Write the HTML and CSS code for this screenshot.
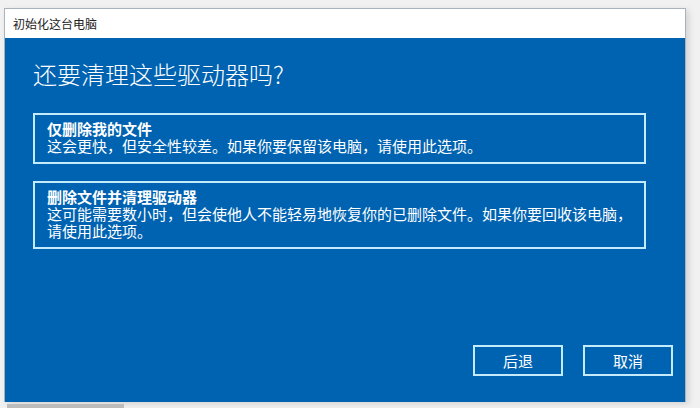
FILE: index.html
```html
<!DOCTYPE html>
<html lang="zh-CN">
<head>
  <meta charset="UTF-8" />
  <meta name="viewport" content="width=device-width, initial-scale=1.0"/>
  <title>初始化这台电脑</title>
  <link rel="stylesheet" href="styles.css">
</head>
<body>
  <div class="dialog">
    <div class="title-bar">初始化这台电脑</div>
    <div class="content">
      <h1>还要清理这些驱动器吗?</h1>

      <div class="option">
        <div class="option-title">仅删除我的文件</div>
        <div class="option-desc">这会更快，但安全性较差。如果你要保留该电脑，请使用此选项。</div>
      </div>

      <div class="option">
        <div class="option-title">删除文件并清理驱动器</div>
        <div class="option-desc">这可能需要数小时，但会使他人不能轻易地恢复你的已删除文件。如果你要回收该电脑，<br>请使用此选项。</div>
      </div>

      <div class="actions">
        <button class="btn">后退</button>
        <button class="btn">取消</button>
      </div>
    </div>
  </div>
  <div class="scroll-thumb"></div>
</body>
</html>
```

FILE: styles.css
```css
body {
  background-color: #f1f1f1;
  font-family: "Noto Sans CJK SC", "Noto Sans", sans-serif;
  margin: 0;
  padding: 8px 0 0 4px;
  height: 408px;
  box-sizing: border-box;
  overflow: hidden;
}

.dialog {
  width: 682px;
  height: 394px;
  display: flex;
  flex-direction: column;
  border: 1px solid #a9b3bd;
  border-bottom: none;
  box-sizing: border-box;
  box-shadow: 3px 2px 6px rgba(0,0,0,0.12);
}

.title-bar {
  height: 29px;
  background: #fff;
  color: #222;
  font-size: 12px;
  line-height: 29px;
  padding-left: 8px;
}

.content {
  flex: 1;
  background: #0063b1;
  color: #fff;
  padding: 20px 0 0 28px;
  display: flex;
  flex-direction: column;
}

h1 {
  font-weight: 300;
  font-size: 24px;
  line-height: 32px;
  margin: 0 0 23px;
}

.option {
  width: 613px;
  box-sizing: border-box;
  border: 2px solid #c3ebfb;
  padding: 5px 12px 8px;
  margin-bottom: 17px;
  font-size: 15px;
  line-height: 17px;
}

.option-title {
  font-weight: bold;
}

.option-desc {
  white-space: nowrap;
}

.actions {
  margin-top: auto;
  display: flex;
  justify-content: flex-end;
  gap: 20px;
  padding: 0 12px 26px 0;
}

.btn {
  width: 90px;
  height: 31px;
  background: transparent;
  border: 2px solid #c3ebfb;
  color: #fff;
  font-family: inherit;
  font-size: 15px;
  cursor: pointer;
}

.scroll-thumb {
  width: 117px;
  height: 5px;
  margin: 2px 0 0 3px;
  background: #bcbcbc;
}
```
